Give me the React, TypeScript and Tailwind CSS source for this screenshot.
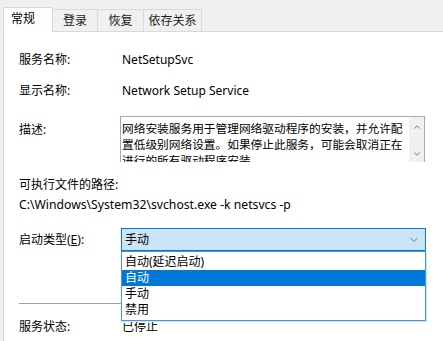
import { ChevronDown, ChevronUp } from "lucide-react";

const tabs = ["常规", "登录", "恢复", "依存关系"];
const tabWidths = ["w-[50px]", "w-[45px]", "w-[46px]", "w-[58px]"];

const options = ["自动(延迟启动)", "自动", "手动", "禁用"];

export default function App() {
  return (
    <div
      className="relative w-[443px] h-[341px] overflow-hidden bg-[#f0f0f0] text-[12px] text-black"
      style={{ fontFamily: '"Noto Sans", "Noto Sans CJK SC", sans-serif' }}
    >
      {/* tab strip */}
      <div className="flex items-end h-[31px] pl-[3px]">
        {tabs.map((t, i) =>
          i === 0 ? (
            <div
              key={t}
              className={`relative z-10 -mb-px h-[25px] ${tabWidths[i]} bg-white border border-b-0 border-[#d9d9d9] flex items-center pl-[7px] pb-[2px]`}
            >
              {t}
            </div>
          ) : (
            <div
              key={t}
              className={`h-[22px] ${tabWidths[i]} border-t border-r border-[#d9d9d9] flex items-center justify-center text-[#1a1a1a]`}
            >
              {t}
            </div>
          )
        )}
      </div>

      {/* panel */}
      <div className="ml-[3px] h-[320px] bg-white border-l border-t border-[#d9d9d9] pl-[15px] pt-[20px] flex flex-col">
        <div className="flex h-[16px] items-center">
          <span className="w-[103px]">服务名称:</span>
          <span>NetSetupSvc</span>
        </div>
        <div className="flex h-[16px] items-center mt-[15px]">
          <span className="w-[103px]">显示名称:</span>
          <span>Network Setup Service</span>
        </div>
        <div className="flex mt-[17px]">
          <span className="w-[101px] mt-[6px] leading-[16px]">描述:</span>
          <div className="flex w-[305px] h-[46px] border border-b-0 border-[#a9a9a9]">
            <div className="flex-1 overflow-hidden pl-[1px] pt-[3px] text-[11.7px] leading-[16px]">
              网络安装服务用于管理网络驱动程序的安装，并允许配置低级别网络设置。如果停止此服务，可能会取消正在进行的所有驱动程序安装。
            </div>
            <div className="w-[15px] bg-[#f0f0f0] flex flex-col items-center justify-between pt-[5px] pb-[3px] text-[#606060]">
              <ChevronUp size={10} strokeWidth={2} />
              <ChevronDown size={10} strokeWidth={2} />
            </div>
          </div>
        </div>
        <div className="mt-[15px] h-[16px] flex items-center">可执行文件的路径:</div>
        <div className="mt-[4px] h-[16px] flex items-center text-[12.2px]">C:\Windows\System32\svchost.exe -k netsvcs -p</div>
        <div className="flex items-center mt-[15px]">
          <span className="w-[102px]">
            启动类型(<span className="underline">E</span>):
          </span>
          <div className="w-[305px] h-[23px] bg-[#cce4f7] border border-[#0078d7] flex items-center justify-between pl-[3px] pr-[5px]">
            <span>手动</span>
            <ChevronDown size={12} strokeWidth={1.5} className="text-[#505050]" />
          </div>
        </div>
        <div className="mt-[52px] h-px w-[406px] bg-[#a0a0a0]" />
        <div className="flex h-[16px] items-center mt-[15px]">
          <span className="w-[103px]">服务状态:</span>
          <span>已停止</span>
        </div>
      </div>

      {/* open dropdown list */}
      <div className="absolute left-[121px] top-[251px] w-[305px] bg-white border border-[#4a94e0] py-[2px] shadow-[1px_1px_0_#cfe3f7]">
        {options.map((o, i) => (
          <div
            key={o}
            className={`h-[16px] pl-[3px] flex items-center ${i === 1 ? "bg-[#0078d7] text-white" : ""}`}
          >
            {o}
          </div>
        ))}
      </div>
    </div>
  );
}
